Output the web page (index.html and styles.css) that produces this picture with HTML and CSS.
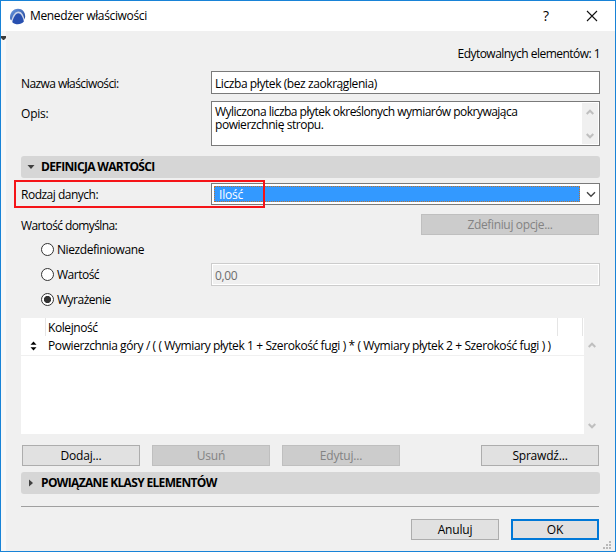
FILE: index.html
```
<!DOCTYPE html>
<html lang="pl">
<head>
<meta charset="utf-8">
<title>Menedżer właściwości</title>
<link rel="stylesheet" href="styles.css">
</head>
<body>
<div class="window">
  <header class="titlebar">
    <svg class="logo" width="17" height="17" viewBox="0 0 17 17">
      <defs><linearGradient id="g" x1="0" y1="0" x2="1" y2="1"><stop offset="0" stop-color="#6f9fe4"/><stop offset="1" stop-color="#1c3f97"/></linearGradient></defs>
      <circle cx="8.500" cy="8.500" r="7.400" fill="#c9d3e8"/>
      <path d="M1.200 11.500C.2 5.500 4.200.8 9 .8c4.500 0 7.200 3.500 7.200 8L15.500 11.500C14.500 6.500 12.500 3.500 9.500 3.500 6 3.500 4.200 7 2.500 12z" fill="url(#g)"/>
      <path d="M3.300 14.200C4.400 9.500 6.800 5.300 9.200 5.300c3 0 4.800 4.500 5.700 8.200-3 3.400-8.200 3.600-11.600.7z" fill="#2850b0"/>
    </svg>
    <h1 class="title"><span class="t-title">Menedżer właściwości</span></h1>
    <span class="help">?</span>
    <svg class="close" width="12" height="12" viewBox="0 0 12 12"><path d="M1 1l10 10M11 1L1 11" stroke="#111" stroke-width="1.100" fill="none"/></svg>
  </header>
  <main class="client">
    <svg class="edge-mark" width="6" height="5" viewBox="0 0 6 5"><path d="M0 0h5v2L3 4H2L0 2z" fill="#3c3c3c"/></svg>
    <p class="count"><span class="t-count">Edytowalnych elementów: 1</span></p>
    <div class="row name-row">
      <label class="label t-name">Nazwa właściwości:</label>
      <div class="field"><span class="t-value">Liczba płytek (bez zaokrąglenia)</span></div>
    </div>
    <div class="row desc-row">
      <label class="label">Opis:</label>
      <div class="field area">
        <div class="desc"><p class="t-desc1">Wyliczona liczba płytek określonych wymiarów pokrywająca</p><p class="t-desc2">powierzchnię stropu.</p></div>
        <div class="scroll">
          <svg width="8" height="6" viewBox="0 0 8 6"><path d="M.7 5L4 1.700 7.300 5" class="arrow"/></svg>
          <svg width="8" height="6" viewBox="0 0 8 6"><path d="M.7 1L4 4.300 7.300 1" class="arrow"/></svg>
        </div>
      </div>
    </div>
    <h2 class="section"><svg class="tri" width="8" height="8" viewBox="0 0 8 8"><path d="M.5 2h7L4 6z" fill="#404040"/></svg><span class="t-def">DEFINICJA WARTOŚCI</span></h2>
    <div class="row type-row">
      <label class="label t-type">Rodzaj danych:</label>
      <div class="field select">
        <span class="selected"><span>Ilość</span></span>
        <svg class="chev" width="10" height="7" viewBox="0 0 10 7"><path d="M1 1.300l4 4 4-4" fill="none" stroke="#444" stroke-width="1.400"/></svg>
      </div>
      <div class="highlight"></div>
    </div>
    <div class="row default-row">
      <label class="label t-default">Wartość domyślna:</label>
      <button class="btn disabled wide"><span class="t-opts">Zdefiniuj opcje...</span></button>
    </div>
    <div class="radio first"><i class="dot"></i><span class="t-undef">Niezdefiniowane</span></div>
    <div class="radio mid"><i class="dot"></i><span class="radio-label t-val">Wartość</span><div class="field off"><span>0,00</span></div></div>
    <div class="radio last"><i class="dot on"></i><span class="t-expr">Wyrażenie</span></div>
    <div class="list">
      <div class="table">
        <div class="thead"><span class="c1"></span><span class="c2"><span class="t-order">Kolejność</span></span><span class="c3"></span></div>
        <div class="trow">
          <svg class="c1" width="24" height="10" viewBox="0 0 24 10"><path d="M12.500.5l3 3.300h-6zM12.500 9.500l3-3.300h-6z" fill="#000"/></svg>
          <span class="formula"><span class="t-formula">Powierzchnia góry / ( ( Wymiary płytek 1 + Szerokość fugi ) * ( Wymiary płytek 2 + Szerokość fugi ) )</span></span>
        </div>
      </div>
      <div class="scroll tall">
        <svg width="8" height="6" viewBox="0 0 8 6"><path d="M.7 5L4 1.700 7.300 5" class="arrow"/></svg>
        <svg width="8" height="6" viewBox="0 0 8 6"><path d="M.7 1L4 4.300 7.300 1" class="arrow"/></svg>
      </div>
    </div>
    <div class="actions">
      <button class="btn">Dodaj...</button>
      <button class="btn disabled">Usuń</button>
      <button class="btn disabled">Edytuj...</button>
      <button class="btn push">Sprawdź...</button>
    </div>
    <h2 class="section closed"><svg class="tri" width="8" height="8" viewBox="0 0 8 8"><path d="M2 .5v7L6 4z" fill="#404040"/></svg><span class="t-rel">POWIĄZANE KLASY ELEMENTÓW</span></h2>
    <hr class="rule">
    <footer class="footer">
      <button class="btn small">Anuluj</button>
      <button class="btn small primary">OK</button>
    </footer>
    <svg class="grip" width="9" height="9" viewBox="0 0 9 9" fill="#b8b8b8"><path d="M6 0h2v2H6zM3 3h2v2H3zM6 3h2v2H6zM0 6h2v2H0zM3 6h2v2H3zM6 6h2v2H6z"/></svg>
  </main>
</div>
</body>
</html>
```
FILE: styles.css
```
* { box-sizing: border-box; }
body { margin: 0; font: 12px/16px "Open Sans", "Noto Sans", sans-serif; color: #000; }
h1, h2, p { margin: 0; font: inherit; }
span { white-space: nowrap; }
svg { display: block; flex: none; }
.window { width: 616px; height: 552px; border: 1px solid #1883d7; background: #f0f0f0; display: flex; flex-direction: column; }
.titlebar { height: 30px; background: #fff; display: flex; align-items: center; padding: 0 17px 0 8px; }
.title { margin-left: 4px; flex: 1; }
.help { font-size: 14px; margin-right: 37px; }
.client { position: relative; flex: 1; border-left: 5px solid #f7f7f7; padding: 14px 15px 0; display: flex; flex-direction: column; }
.edge-mark { position: absolute; left: -5px; top: 5px; }
.count { text-align: right; height: 16px; margin-bottom: 10px; padding-top: 1px; }
.row { display: flex; align-items: flex-start; position: relative; }
.label { width: 190px; flex: none; white-space: nowrap; padding-top: 2px; }
.field { flex: 1; height: 23px; border: 1px solid #7a7a7a; background: #fff; padding: 4px 3px 0; }
.name-row { align-items: center; height: 23px; }
.desc-row { margin-top: 7px; height: 45px; }
.desc-row .label { padding-top: 5px; letter-spacing: -.2px; }
.area { height: 45px; padding: 1px 1px 1px 3px; display: flex; justify-content: space-between; }
.desc { line-height: 13px; padding-top: 2px; white-space: nowrap; }
.scroll { width: 16px; background: #f0f0f0; display: flex; flex-direction: column; justify-content: space-between; align-items: center; padding: 6px 0 5px; }
.arrow { fill: none; stroke: #bfbfbf; stroke-width: 2; }
.section { margin-top: 10px; height: 22px; border-radius: 3px; background: #d6d6d6; display: flex; align-items: center; font-weight: 700; padding-left: 6px; flex: none; }
.tri { margin-right: 6px; }
.type-row { margin-top: 5px; height: 22px; align-items: center; }
.select { height: 22px; padding: 2px; display: flex; align-items: center; }
.selected { width: 366px; height: 16px; background: #39f; color: #fff; border: 1px dotted #b87333; line-height: 15px; padding-left: 4px; letter-spacing: -.2px; }
.chev { margin-left: 6px; }
.highlight { position: absolute; left: -7px; top: -3px; width: 251px; height: 28px; border: 2px solid #f51418; }
.default-row { margin-top: 9px; height: 21px; align-items: center; justify-content: space-between; padding-right: 1px; }
.btn { width: 118px; height: 21px; border: 1px solid #adadad; background: #e1e1e1; font: inherit; color: #000; padding: 0; line-height: 19px; text-align: center; letter-spacing: -.2px; }
.btn.disabled { background: #ccc; border-color: #bfbfbf; color: #838383; }
.btn.wide { width: 178px; }
.btn.small { width: 88px; }
.btn.primary { border: 2px solid #0078d7; line-height: 17px; }
.radio { display: flex; align-items: center; height: 25px; padding-left: 20px; }
.radio.first { margin-top: 2px; }
.dot { width: 13px; height: 13px; border: 1px solid #333; border-radius: 50%; background: #fff; margin-right: 3px; flex: none; }
.dot.on { background: radial-gradient(circle, #333 3.300px, #fff 3.900px); }
.radio > span { padding-top: 1px; }
.radio-label { width: 154px; }
.off { background: #f0f0f0; border-color: #ccc; box-shadow: inset 0 0 0 1px #fff; color: #6d6d6d; letter-spacing: -.4px; }
.list { margin-top: 6px; height: 116px; display: flex; flex: none; }
.table { width: 563px; background: #fff; }
.thead { display: flex; height: 18px; }
.c1 { width: 24px; }
.c2 { width: 513px; border: solid #e5e5e5; border-width: 0 1px; padding: 2px 0 0 2px; }
.c3 { width: 25px; border-right: 1px solid #e5e5e5; }
.trow { height: 20px; display: flex; align-items: center; border-bottom: 1px solid #f0f0f0; }
.formula { padding: 1px 0 0 3px; }
.tall { padding: 24px 0 5px; }
.actions { display: flex; gap: 12px; margin-top: 11px; padding: 0 1px; }
.push { margin-left: auto; }
.closed { margin-top: 6px; }
.rule { width: 578px; height: 1px; border: 0; background: #a0a0a0; margin: 12px 0; flex: none; }
.footer { display: flex; justify-content: flex-end; gap: 12px; padding-right: 1px; }
.grip { position: absolute; right: 3px; bottom: 1px; }
.t-title { letter-spacing: -.35px; }
.t-count { letter-spacing: -.53px; }
.t-name { letter-spacing: -.58px; }
.t-value { letter-spacing: -.42px; }
.t-desc1 { letter-spacing: -.52px; }
.t-desc2 { letter-spacing: -.45px; }
.t-def { letter-spacing: -.66px; }
.t-type { letter-spacing: -.5px; }
.t-default { letter-spacing: -.6px; }
.t-opts { letter-spacing: -.35px; }
.t-undef { letter-spacing: -.42px; }
.t-val, .t-expr { letter-spacing: -.5px; }
.t-order { letter-spacing: -.42px; }
.t-formula { letter-spacing: -.4px; }
.t-rel { letter-spacing: -.66px; }
```
